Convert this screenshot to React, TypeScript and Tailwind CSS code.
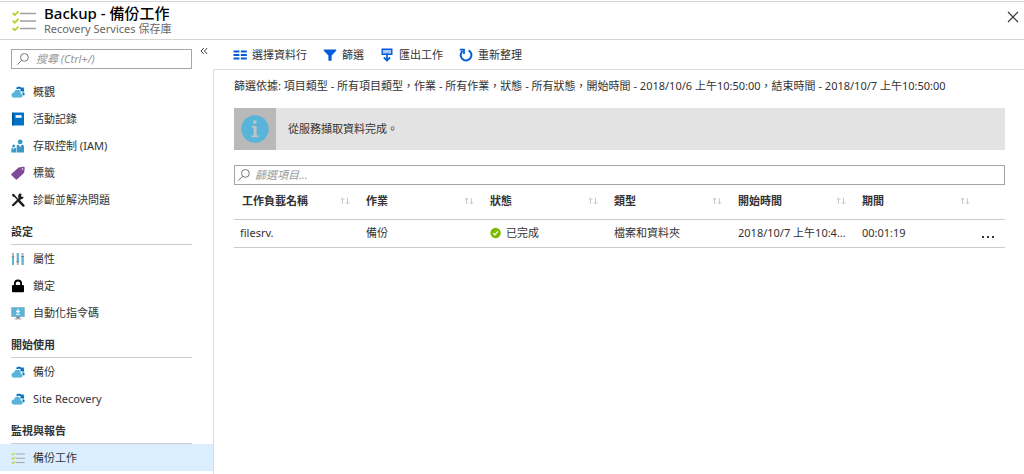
import type { ReactNode } from "react";

type NavItem = { label: string; icon: ReactNode; active?: boolean };
type NavGroup = { title?: string; items: NavItem[] };

function CloudIcon() {
  return (
    <svg viewBox="0 0 14 14" className="size-3.5">
      <path d="M5 3.2C6.6 1.4 9.4 1.3 11 2.9l1.5-.8.8 4.6-4.5-.8 1.4-1.2C9 3.8 7.6 3.6 6.4 4.2z" fill="#0072c6" />
      <path d="M11 7.6h1.4c1 .2 1.4 1 1.2 1.9-.1.5-.5.9-1.1 1.1z" fill="#0072c6" />
      <g fill="#59b4d9">
        <circle cx="3" cy="10.1" r="2.5" />
        <circle cx="6.4" cy="8" r="3.3" />
        <circle cx="9.8" cy="10.6" r="2" />
        <path d="M3 8h6.5v4.6H3z" />
      </g>
    </svg>
  );
}

function BookIcon() {
  return (
    <svg viewBox="0 0 14 14" className="size-3.5">
      <path d="M2 .5h10.3a.7.7 0 0 1 .7.7v11.6a.7.7 0 0 1-.7.7H2a1 1 0 0 1-1-1v-11a1 1 0 0 1 1-1z" fill="#0072c6" />
      <path d="M1 1.5a1 1 0 0 1 1-1h.7v13H2a1 1 0 0 1-1-1z" fill="#0058a1" />
      <path d="M4.6 3.2h6v2.6h-6z" fill="#fff" />
    </svg>
  );
}

function PeopleIcon() {
  return (
    <svg viewBox="0 0 14 14" className="size-3.5">
      <g fill="#3999c6">
        <circle cx="9.2" cy="2.9" r="2.4" />
        <path d="M5.6 13.4V7.4a1.6 1.6 0 0 1 1.6-1.6h.6l1.4 2.4 1.4-2.4h.8A1.6 1.6 0 0 1 13 7.4v6z" />
        <circle cx="2.7" cy="7" r="1.5" />
        <path d="M.4 13.4v-3c0-.8.5-1.3 1.2-1.3h.3l.8 1.3.8-1.3H5v4.3z" />
      </g>
    </svg>
  );
}

function TagIcon() {
  return (
    <svg viewBox="0 0 14 14" className="size-3.5">
      <path d="M7.6 1.4 12.4.8a1.1 1.1 0 0 1 1.3 1.1l-.5 4.3-.8 1.2-6.2 5.9a1 1 0 0 1-1.5 0L.5 9.2a1 1 0 0 1 .1-1.5z" fill="#804998" />
      <circle cx="11.5" cy="3" r=".8" fill="#fff" />
    </svg>
  );
}

function ToolsIcon() {
  return (
    <svg viewBox="0 0 14 14" className="size-3.5">
      <path d="M2 1.2 12.2 12.4" stroke="#1e1e1e" strokeWidth="1.5" />
      <path d="m7.6 7.4 4.8 5.2" stroke="#1e1e1e" strokeWidth="2.4" strokeLinecap="round" />
      <path d="M2 12.2 9.8 4.6" stroke="#1e1e1e" strokeWidth="2.2" strokeLinecap="round" />
      <path d="M12.6 3.8a2.4 2.4 0 0 1-4.2 1.6A2.5 2.5 0 0 1 10.8 1L9.9 3l1 .9z" fill="#1e1e1e" />
      <path d="m1 1 2.2.6 1 1.8-1 .9-1.6-1.1z" fill="#1e1e1e" />
    </svg>
  );
}

function SlidersIcon() {
  return (
    <svg viewBox="0 0 14 14" className="size-3.5">
      <path d="M2 1v12M6.8 1v12M11.6 1v12" stroke="#b4b6b8" strokeWidth="2" />
      <path d="M2 5.6V13M6.8 9.4V1M11.6 5V13" stroke="#59b4d9" strokeWidth="2" />
      <path d="M.6 5h2.8M5.4 9.8h2.8M10.2 4.5H13" stroke="#7a7a7a" strokeWidth="1" />
    </svg>
  );
}

function LockIcon() {
  return (
    <svg viewBox="0 0 14 14" className="size-3.5">
      <path d="M3.9 7V4.6a3.1 3.1 0 0 1 6.2 0V7" fill="none" stroke="#000" strokeWidth="1.8" />
      <rect x="1" y="6" width="12" height="7.2" rx=".9" fill="#000" />
    </svg>
  );
}

function ScreenIcon() {
  return (
    <svg viewBox="0 0 14 14" className="size-3.5">
      <rect x=".7" y="1.5" width="12.6" height="9.2" fill="#59b4d9" stroke="#7fa9bd" strokeWidth=".6" />
      <path d="M5.6 10.8h2.8l.6 1.8H5z" fill="#7a7a7a" />
      <path d="M3.6 12.4h6.8v1H3.6z" fill="#a0a1a2" />
      <path d="M7 2.8v3.4M5.2 4.8 7 6.5l1.8-1.7M5 8.2h4" fill="none" stroke="#fff" strokeWidth="1.1" />
    </svg>
  );
}

function ChecklistIcon({ className }: { className: string }) {
  return (
    <svg viewBox="0 0 24 21" className={className} fill="none">
      <g stroke="#b8d432" strokeWidth="1.9">
        <path d="M.6 3 2.8 5 6.6 1.4" />
        <path d="m.6 10.6 2.2 2L6.6 9" />
        <path d="m.6 18.2 2.2 2 3.8-3.6" />
      </g>
      <path d="M8 3.5h16M8 11h16M8 18.5h16" stroke="#a0a1a2" strokeWidth="1.6" />
    </svg>
  );
}

function SearchIcon() {
  return (
    <svg viewBox="0 0 14 14" className="size-3.5 shrink-0" fill="none" stroke="#767676">
      <circle cx="8.4" cy="5.4" r="3.9" />
      <path d="M5.6 8.3 1.4 12.6" />
    </svg>
  );
}

function SortIcon() {
  return (
    <svg viewBox="0 0 10 8" className="h-2 w-2.5 shrink-0" fill="none" stroke="#c4c4c4" strokeWidth=".9">
      <path d="M2.5 7V1M.7 2.8 2.5 1l1.8 1.8M7.5 1v6M5.7 5.2 7.5 7l1.8-1.8" />
    </svg>
  );
}

const NAV: NavGroup[] = [
  {
    items: [
      { label: "概觀", icon: <CloudIcon /> },
      { label: "活動記錄", icon: <BookIcon /> },
      { label: "存取控制 (IAM)", icon: <PeopleIcon /> },
      { label: "標籤", icon: <TagIcon /> },
      { label: "診斷並解決問題", icon: <ToolsIcon /> },
    ],
  },
  {
    title: "設定",
    items: [
      { label: "屬性", icon: <SlidersIcon /> },
      { label: "鎖定", icon: <LockIcon /> },
      { label: "自動化指令碼", icon: <ScreenIcon /> },
    ],
  },
  {
    title: "開始使用",
    items: [
      { label: "備份", icon: <CloudIcon /> },
      { label: "Site Recovery", icon: <CloudIcon /> },
    ],
  },
  {
    title: "監視與報告",
    items: [{ label: "備份工作", icon: <ChecklistIcon className="h-3 w-3.5" />, active: true }],
  },
];

const ACTIONS: { label: string; icon: ReactNode }[] = [
  {
    label: "選擇資料行",
    icon: (
      <svg viewBox="0 0 14 14" className="size-3.5" stroke="#015cda" strokeWidth="2">
        <path d="M.5 3.5H6.4M.5 7H6.4M.5 10.5H6.4M7.8 3.5h6M7.8 7h6M7.8 10.5h6" />
      </svg>
    ),
  },
  {
    label: "篩選",
    icon: (
      <svg viewBox="0 0 14 14" className="size-3.5" fill="#015cda">
        <path d="M.8 1.5h12.4v1.2L8.6 7.5v5.3H5.4V7.5L.8 2.7z" />
      </svg>
    ),
  },
  {
    label: "匯出工作",
    icon: (
      <svg viewBox="0 0 14 14" className="size-3.5" fill="none" stroke="#015cda" strokeWidth="1.4">
        <path d="M2.2 1.2h9.6v5H2.2z" fill="#a9c8f5" />
        <path d="M7 5.5v7M3.8 9.4 7 12.6l3.2-3.2" strokeWidth="1.7" />
      </svg>
    ),
  },
  {
    label: "重新整理",
    icon: (
      <svg viewBox="0 0 14 14" className="size-3.5" fill="none" stroke="#015cda" strokeWidth="2">
        <path d="M9.6 2.3a5.4 5.4 0 1 1-6 .6" />
        <path d="M.8 1.7h4.2v4.2" strokeWidth="1.7" />
      </svg>
    ),
  },
];

const COLUMNS = ["工作負載名稱", "作業", "狀態", "類型", "開始時間", "期間"];

const JOBS = [
  { name: "filesrv.", operation: "備份", status: "已完成", type: "檔案和資料夾", start: "2018/10/7 上午10:4...", duration: "00:01:19" },
];

function Sidebar() {
  return (
    <nav className="w-[213px] shrink-0 pt-[9px]">
      <div className="flex items-start gap-2 pl-[11px]">
        <label className="flex h-5 w-[181px] items-center gap-1.5 border border-[#a6a6a6] px-1">
          <SearchIcon />
          <input
            aria-label="搜尋"
            placeholder="搜尋 (Ctrl+/)"
            className="w-full min-w-0 bg-transparent italic outline-none placeholder:text-[#999]"
          />
        </label>
        <button aria-label="收合" className="-mt-0.5">
          <svg viewBox="0 0 8 8" className="size-2" fill="none" stroke="#444">
            <path d="M3.8 1 1 4l2.8 3M7.2 1 4.4 4l2.8 3" />
          </svg>
        </button>
      </div>
      <div className="mt-[9px]">
        {NAV.map((group, i) => (
          <section key={i}>
            {group.title && (
              <h2 className="mr-[21px] ml-[11px] flex h-8 items-center border-b border-[#ccc] pt-1.5 font-bold">{group.title}</h2>
            )}
            <ul>
              {group.items.map((item) => (
                <li key={item.label}>
                  <a
                    href="#"
                    className={`flex h-[27px] items-center gap-2 pl-[11px] ${item.active ? "bg-[#dbeeff]" : "hover:bg-gray-100"}`}
                  >
                    {item.icon}
                    {item.label}
                  </a>
                </li>
              ))}
            </ul>
          </section>
        ))}
      </div>
    </nav>
  );
}

function JobsTable() {
  return (
    <table className="mt-0.5 w-full table-fixed text-left">
      <thead>
        <tr className="h-8 border-b border-[#ccc]">
          {COLUMNS.map((col) => (
            <th key={col} className="px-2 pb-1 font-bold">
              <div className="flex items-center justify-between">
                {col}
                <SortIcon />
              </div>
            </th>
          ))}
          <th className="w-[27px]" />
        </tr>
      </thead>
      <tbody>
        {JOBS.map((job) => (
          <tr key={job.name} className="h-7 border-b border-[#ccc]">
            <td className="px-1.5">{job.name}</td>
            <td className="px-2">{job.operation}</td>
            <td className="px-2">
              <div className="flex items-center gap-1">
                <svg viewBox="0 0 12 12" className="size-3">
                  <circle cx="5.6" cy="6" r="5.2" fill="#7fba00" />
                  <path d="m3.2 6.2 1.7 1.6 3-3.4" fill="none" stroke="#fff" strokeWidth="1.2" />
                </svg>
                {job.status}
              </div>
            </td>
            <td className="px-2">{job.type}</td>
            <td className="pl-2 whitespace-nowrap">{job.start}</td>
            <td className="px-2">{job.duration}</td>
            <td>
              <button aria-label="更多" className="flex gap-[3px] px-1 pt-2">
                <i className="size-0.5 bg-[#333]" />
                <i className="size-0.5 bg-[#333]" />
                <i className="size-0.5 bg-[#333]" />
              </button>
            </td>
          </tr>
        ))}
      </tbody>
    </table>
  );
}

export default function App() {
  return (
    <div className="flex min-h-screen flex-col bg-white pt-px font-['Noto_Sans','Noto_Sans_CJK_TC',sans-serif] text-[11px] leading-4 text-[#333]">
      <header className="flex h-[39px] items-center gap-2 border-y border-[#d4d4d4] pl-3">
        <ChecklistIcon className="h-[21px] w-6" />
        <div className="flex-1 pb-0.5">
          <h1 className="text-[15px] leading-[18px] font-medium text-black">Backup - 備份工作</h1>
          <p className="leading-[14px] text-[#666]">Recovery Services 保存庫</p>
        </div>
        <button aria-label="關閉" className="mb-2 px-[5px]">
          <svg viewBox="0 0 12 12" className="size-3" stroke="#333" strokeWidth="1.1">
            <path d="m1 1 10 10M11 1 1 11" />
          </svg>
        </button>
      </header>

      <div className="flex flex-1">
        <Sidebar />
        <main className="flex min-w-0 flex-1 flex-col">
          <div className="flex h-[30px] items-center gap-4 border-b border-[#ddd] pl-5">
            {ACTIONS.map((action) => (
              <button key={action.label} className="flex items-center gap-[5px]">
                {action.icon}
                {action.label}
              </button>
            ))}
          </div>

          <div className="flex-1 border-l border-[#ddd] pr-[19px] pl-5">
            <p className="pt-2">
              篩選依據: 項目類型 - 所有項目類型，作業 - 所有作業，狀態 - 所有狀態，開始時間 - 2018/10/6 上午10:50:00，結束時間 - 2018/10/7 上午10:50:00
            </p>
            <div className="mt-3.5 flex h-[42px] items-center gap-3 bg-[#e3e3e3]">
              <div className="flex h-full w-[42px] items-center justify-center bg-[#b9b9b9]">
                <svg viewBox="0 0 28 28" className="size-7">
                  <circle cx="14" cy="14" r="13.7" fill="#59b4d9" />
                  <circle cx="13.8" cy="7" r="1.8" fill="#c0c4c6" />
                  <path d="M10.8 11h4.8v9.6h2v1.6h-7v-1.6h2v-8h-1.8z" fill="#c0c4c6" />
                </svg>
              </div>
              從服務擷取資料完成。
            </div>
            <label className="mt-[15px] flex h-5 items-center gap-1 border border-[#a6a6a6] px-0.5">
              <SearchIcon />
              <input
                aria-label="篩選項目"
                placeholder="篩選項目..."
                className="w-full min-w-0 bg-transparent italic outline-none placeholder:text-[#999]"
              />
            </label>
            <JobsTable />
          </div>
        </main>
      </div>
    </div>
  );
}
